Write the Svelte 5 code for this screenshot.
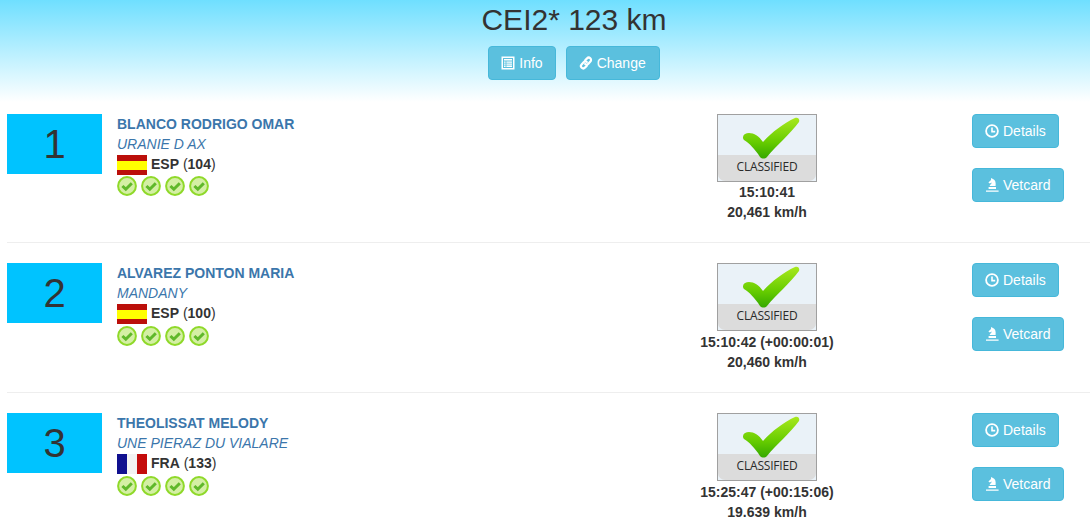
<script lang="ts">
  const results = [
    { rank: 1, rider: "BLANCO RODRIGO OMAR", horse: "URANIE D AX", nation: "ESP", bib: 104, time: "15:10:41", speed: "20,461 km/h" },
    { rank: 2, rider: "ALVAREZ PONTON MARIA", horse: "MANDANY", nation: "ESP", bib: 100, time: "15:10:42 (+00:00:01)", speed: "20,460 km/h" },
    { rank: 3, rider: "THEOLISSAT MELODY", horse: "UNE PIERAZ DU VIALARE", nation: "FRA", bib: 133, time: "15:25:47 (+00:15:06)", speed: "19.639 km/h" },
  ];
  const gates = [1, 2, 3, 4];
</script>

<header class="top">
  <h1>CEI2* 123 km</h1>
  <div class="top-btns">
    <button class="btn">
      <svg viewBox="0 0 14 14" width="14" height="14"><path fill="#fff" fill-rule="evenodd" d="M0.5 0.5h13v13H0.5zM2 2v10h10V2zM3 3h8v1.6H3zM3 5.4h1.6v1.3H3zM5.4 5.4H11v1.3H5.4zM3 7.5h1.6v1.3H3zM5.4 7.5H11v1.3H5.4zM3 9.6h1.6v1.3H3zM5.4 9.6H11v1.3H5.4z"/></svg>
      Info
    </button>
    <button class="btn wide">
      <svg viewBox="0 0 14 14" width="14" height="14" fill="none" stroke="#fff" stroke-width="2.2" stroke-linecap="round"><path d="M6.2 4.2 8 2.4a2.3 2.3 0 0 1 3.4 3.2L9.4 7.8a2.3 2.3 0 0 1-3.2.2"/><path d="M7.8 9.8 6 11.6a2.3 2.3 0 0 1-3.4-3.2L4.6 6.2a2.3 2.3 0 0 1 3.2-.2"/></svg>
      Change
    </button>
  </div>
</header>

<main>
  {#each results as r}
    <section class="row">
      <div class="rank">{r.rank}</div>
      <div class="info">
        <a class="rider" href="#top">{r.rider}</a>
        <a class="horse" href="#top">{r.horse}</a>
        <div class="nation">
          {#if r.nation === "ESP"}
            <svg class="flag" viewBox="0 0 30 20" width="30" height="20"><rect width="30" height="20" fill="#bb0f0a"/><rect y="6" width="30" height="9" fill="#ffff00"/></svg>
          {:else}
            <svg class="flag" viewBox="0 0 30 20" width="30" height="20"><rect width="10" height="20" fill="#10108f"/><rect x="10" width="10" height="20" fill="#f2f2f2"/><rect x="20" width="10" height="20" fill="#c40c0c"/></svg>
          {/if}
          <span><b>{r.nation}</b> (<b>{r.bib}</b>)</span>
        </div>
        <div class="gates">
          {#each gates as g (g)}
            <svg viewBox="0 0 20 20" width="20" height="20">
              <circle cx="10" cy="10" r="8.9" fill="#d4efa4" stroke="#8fd92a" stroke-width="2"/>
              <path d="M5.4 10 8.8 13.2 14.8 7.2" fill="none" stroke="#5fb82a" stroke-width="3"/>
            </svg>
          {/each}
        </div>
      </div>
      <div class="status">
        <div class="badge">
          <div class="badge-label">CLASSIFIED</div>
          <svg class="tick" viewBox="0 0 98 66" width="98" height="66">
            <defs>
              <linearGradient id="tick{r.rank}" x1="0" y1="0" x2="0" y2="1">
                <stop offset="0" stop-color="#a8e81e"/>
                <stop offset="0.6" stop-color="#66cc00"/>
                <stop offset="1" stop-color="#35a800"/>
              </linearGradient>
            </defs>
            <path d="M25 22C25.5 19 28 18 31 18 36 18 41 21 45 27 54 17 66 8 77 3 80 2 82 4 81 7 72 19 58 31 49 42 47 44 44 44 42 42 37 34 31 28 26 25 25 24 25 23 25 22Z" fill="url(#tick{r.rank})"/>
          </svg>
        </div>
        <div class="time">{r.time}</div>
        <div class="speed">{r.speed}</div>
      </div>
      <div class="actions">
        <button class="btn">
          <svg viewBox="0 0 14 14" width="14" height="14" fill="none" stroke="#fff"><circle cx="7" cy="7" r="5.9" stroke-width="1.8"/><path d="M7 3.4V7.6H10.2" stroke-width="1.6"/></svg>
          Details
        </button>
        <button class="btn wide">
          <svg viewBox="0 0 14 14" width="14" height="14"><path fill="#fff" d="M6 0 8 1C10.4 2 11 4.6 10.6 8H4.6C5 6.8 6.6 6 6.8 4.6L4.8 5.6 3.4 4.4 6 2zM3.6 9H11V11H3.6zM1 12.4H13.6V13.8H1z"/></svg>
          Vetcard
        </button>
      </div>
    </section>
  {/each}
</main>

<style>
  :global(body) {
    font-family: "Liberation Sans", Arial, sans-serif;
    font-size: 14px;
    color: #333;
    background: #fff;
    height: 518px;
    overflow: hidden;
  }
  .top {
    height: 102px;
    box-sizing: border-box;
    padding: 0 0 0 58px;
    text-align: center;
    background: linear-gradient(to bottom, #6fdfff, #fff);
  }
  h1 {
    margin: 0;
    padding-top: 3px;
    font-size: 30px;
    font-weight: 400;
    line-height: 33px;
  }
  .top-btns {
    display: flex;
    justify-content: center;
    gap: 10px;
    margin-top: 10px;
  }
  .btn {
    display: inline-flex;
    align-items: center;
    gap: 4px;
    height: 34px;
    padding: 0 12px;
    background: #5bc0de;
    border: 1px solid #46b8da;
    border-radius: 4px;
    color: #fff;
    font: inherit;
    white-space: nowrap;
  }
  .btn.wide { padding-right: 13px; }
  .row {
    display: grid;
    grid-template-columns: 110px 550px 200px 1fr;
    margin-left: 7px;
    height: 149.6px;
    box-sizing: border-box;
    padding-top: 20px;
    border-bottom: 1px solid #eee;
  }
  .row:first-child {
    height: 141.2px;
    padding-top: 11.6px;
  }
  .rank {
    width: 95px;
    height: 60px;
    background: #00c3ff;
    font-size: 40px;
    line-height: 60px;
    text-align: center;
  }
  .info {
    display: flex;
    flex-direction: column;
    align-items: flex-start;
  }
  .rider, .horse {
    line-height: 20px;
    color: #3b76ab;
    text-decoration: none;
  }
  .rider { font-weight: 700; }
  .horse { font-style: italic; }
  .nation {
    display: flex;
    align-items: flex-end;
    gap: 4px;
    height: 21px;
    line-height: 20px;
  }
  .nation span { margin-bottom: 1px; }
  .gates {
    display: flex;
    gap: 4px;
    height: 20px;
    margin-top: 1.8px;
  }
  .status {
    display: flex;
    flex-direction: column;
    align-items: center;
    font-weight: 700;
    line-height: 20px;
    white-space: nowrap;
  }
  .badge {
    position: relative;
    display: flex;
    flex-direction: column;
    justify-content: flex-end;
    width: 100px;
    height: 68px;
    box-sizing: border-box;
    border: 1px solid #a0a0a0;
    background: #eaf2f8;
    margin-bottom: 0.8px;
  }
  .tick {
    position: absolute;
    left: 0;
    top: 0;
  }
  .badge-label {
    height: 26px;
    background: #dcdcdc;
    border-radius: 0 0 7px 7px;
    font-family: "Open Sans", sans-serif;
    font-size: 12px;
    font-weight: 400;
    line-height: 24px;
    letter-spacing: -0.2px;
    text-align: center;
    color: #2a2a2a;
  }
  .actions {
    display: flex;
    flex-direction: column;
    align-items: flex-start;
    gap: 20px;
    padding-left: 105px;
  }
</style>
